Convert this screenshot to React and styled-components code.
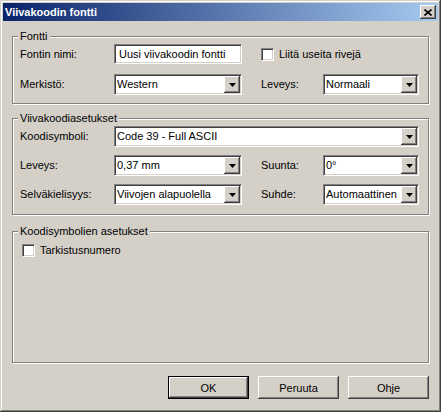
import styled, { createGlobalStyle, css } from 'styled-components';

const GlobalStyle = createGlobalStyle`
  html, body {
    margin: 0;
    padding: 0;
    background: #d4d0c8;
  }
  body {
    font-family: "Liberation Sans", Arial, sans-serif;
    font-size: 11px;
    color: #000;
  }
`;

const Window = styled.div`
  width: 441px;
  height: 412px;
  box-sizing: border-box;
  padding: 3px;
  background: #d4d0c8;
  display: flex;
  flex-direction: column;
  box-shadow: inset -1px -1px #404040, inset 1px 1px #d4d0c8,
    inset -2px -2px #808080, inset 2px 2px #fff;
`;

const TitleBar = styled.div`
  height: 18px;
  display: flex;
  align-items: center;
  justify-content: space-between;
  padding: 0 2px;
  background: linear-gradient(to right, #0a246a, #a6caf0);
`;

const Title = styled.span`
  color: #fff;
  font-weight: bold;
  font-size: 11px;
  line-height: 18px;
`;

const CloseButton = styled.div`
  width: 16px;
  height: 14px;
  box-sizing: border-box;
  background: #d4d0c8;
  display: flex;
  align-items: center;
  justify-content: center;
  box-shadow: inset -1px -1px #404040, inset 1px 1px #fff,
    inset -2px -2px #808080;
`;

const Body = styled.div`
  flex: 1;
  display: flex;
  flex-direction: column;
  padding: 15px 9px 10px 9px;
`;

const Group = styled.div`
  position: relative;
  box-sizing: border-box;
  width: 417px;
  height: ${p => p.$height}px;
  margin-bottom: ${p => p.$gap || 0}px;
  border: 1px solid #808080;
  box-shadow: inset 1px 1px #fff, 1px 1px #fff;
  padding: ${p => p.$padTop}px 8px 0 7px;
`;

const Legend = styled.span`
  position: absolute;
  top: -7px;
  left: 5px;
  padding: 0 2px;
  line-height: 13px;
  background: #d4d0c8;
`;

const FieldGrid = styled.div`
  display: grid;
  grid-template-columns: 94px 128px 19px 62px 96px;
  row-gap: ${p => p.$rowGap}px;
  align-items: center;
`;

const Label = styled.span`
  grid-column: ${p => p.$col || 'auto'};
  line-height: 13px;
`;

const sunken = css`
  box-sizing: border-box;
  background: #fff;
  border: 1px solid;
  border-color: #808080 #fff #fff #808080;
  box-shadow: inset 1px 1px #404040, inset -1px -1px #d4d0c8;
`;

const TextBox = styled.div`
  ${sunken};
  grid-column: ${p => p.$col || 'auto'};
  height: 20px;
  padding: 0 3px 0 4px;
  line-height: 18px;
  white-space: nowrap;
  overflow: hidden;
`;

const Combo = styled.div`
  ${sunken};
  grid-column: ${p => p.$col || 'auto'};
  height: 21px;
  padding: 1px;
  display: flex;
  align-items: center;
`;

const ComboValue = styled.span`
  flex: 1;
  padding-left: 1px;
  line-height: 17px;
  white-space: nowrap;
  overflow: hidden;
`;

const DropButton = styled.span`
  width: 16px;
  height: 17px;
  box-sizing: border-box;
  background: #d4d0c8;
  display: flex;
  align-items: center;
  justify-content: center;
  box-shadow: inset -1px -1px #404040, inset 1px 1px #fff,
    inset -2px -2px #808080;
`;

const CheckRow = styled.label`
  grid-column: ${p => p.$col || 'auto'};
  margin-left: ${p => p.$indent || 0}px;
  display: flex;
  align-items: center;
  gap: 5px;
  line-height: 13px;
`;

const CheckBox = styled.span`
  ${sunken};
  width: 13px;
  height: 13px;
  flex: none;
`;

const ButtonRow = styled.div`
  display: flex;
  justify-content: flex-end;
  gap: 9px;
  margin-top: auto;
`;

const Button = styled.div`
  width: 81px;
  height: 23px;
  box-sizing: border-box;
  display: flex;
  align-items: center;
  justify-content: center;
  background: #d4d0c8;
  box-shadow: inset -1px -1px #404040, inset 1px 1px #fff,
    inset -2px -2px #808080;
  ${p => p.$default && css`
    border: 1px solid #000;
  `}
`;

const Arrow = () => (
  <svg width="7" height="4" viewBox="0 0 7 4">
    <polygon points="0,0 7,0 3.5,4" fill="#000" />
  </svg>
);

const Select = ({ value, col }) => (
  <Combo $col={col}>
    <ComboValue>{value}</ComboValue>
    <DropButton><Arrow /></DropButton>
  </Combo>
);

const App = () => (
  <>
    <GlobalStyle />
    <Window>
      <TitleBar>
        <Title>Viivakoodin fontti</Title>
        <CloseButton>
          <svg width="8" height="7" viewBox="0 0 8 7">
            <path d="M0.5 0.5 L7.5 6.5 M7.5 0.5 L0.5 6.5" stroke="#000" strokeWidth="1.6" />
          </svg>
        </CloseButton>
      </TitleBar>
      <Body>
        <Group $height={68} $padTop={7} $gap={14}>
          <Legend>Fontti</Legend>
          <FieldGrid $rowGap={10}>
            <Label>Fontin nimi:</Label>
            <TextBox>Uusi viivakoodin fontti</TextBox>
            <CheckRow $col="4 / 6">
              <CheckBox />
              Liitä useita rivejä
            </CheckRow>
            <Label>Merkistö:</Label>
            <Select value="Western" />
            <Label $col="4">Leveys:</Label>
            <Select value="Normaali" col="5" />
          </FieldGrid>
        </Group>

        <Group $height={97} $padTop={7} $gap={16}>
          <Legend>Viivakoodiasetukset</Legend>
          <FieldGrid $rowGap={8}>
            <Label>Koodisymboli:</Label>
            <Select value="Code 39 - Full ASCII" col="2 / 6" />
            <Label>Leveys:</Label>
            <Select value="0,37 mm" />
            <Label $col="4">Suunta:</Label>
            <Select value="0°" col="5" />
            <Label>Selväkielisyys:</Label>
            <Select value="Viivojen alapuolella" />
            <Label $col="4">Suhde:</Label>
            <Select value="Automaattinen" col="5" />
          </FieldGrid>
        </Group>

        <Group $height={132} $padTop={12}>
          <Legend>Koodisymbolien asetukset</Legend>
          <FieldGrid $rowGap={0}>
            <CheckRow $col="1 / 3" $indent={2}>
              <CheckBox />
              Tarkistusnumero
            </CheckRow>
          </FieldGrid>
        </Group>

        <ButtonRow>
          <Button $default>OK</Button>
          <Button>Peruuta</Button>
          <Button>Ohje</Button>
        </ButtonRow>
      </Body>
    </Window>
  </>
);

export default App;
